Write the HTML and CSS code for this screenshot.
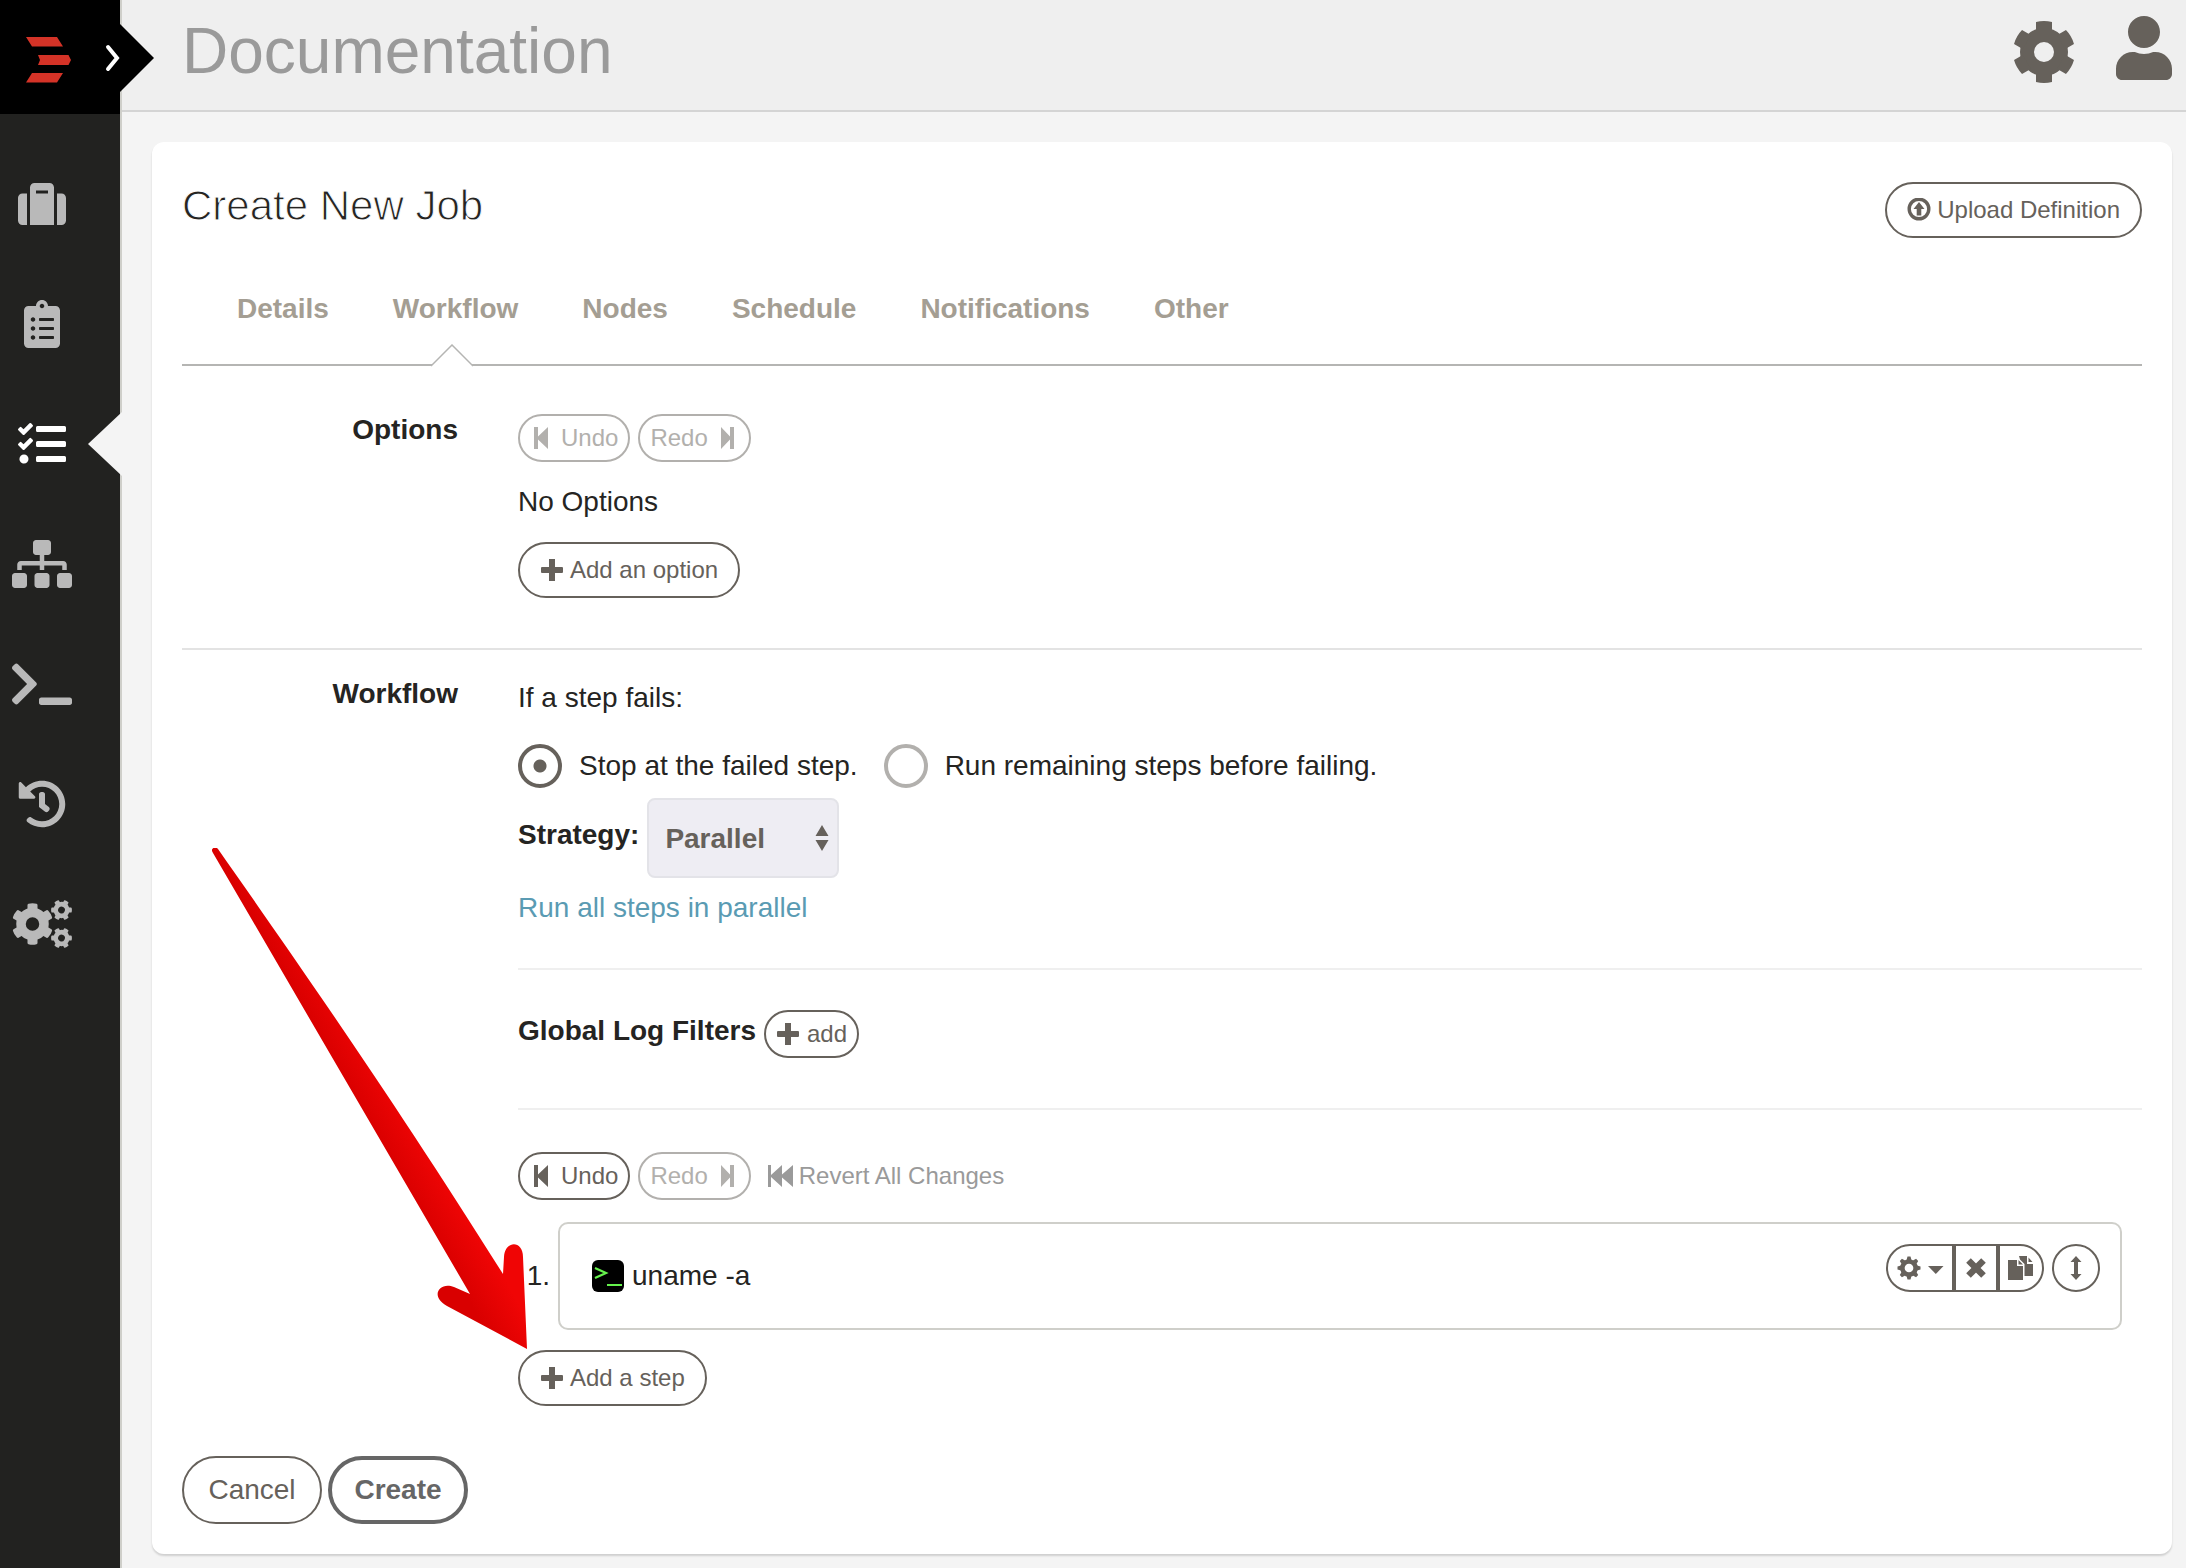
FILE: index.html
```html
<!DOCTYPE html>
<html lang="en">
<head>
<meta charset="utf-8">
<title>Create New Job</title>
<link rel="stylesheet" href="styles.css">
</head>
<body>
<svg class="defs" aria-hidden="true">
  <symbol id="plus" viewBox="0 0 24 24"><path d="M9 1h6v8h7q1 0 1 1v4q0 1-1 1h-7v8h-6v-8H2q-1 0-1-1v-4q0-1 1-1h7z"/></symbol>
  <symbol id="step-back" viewBox="0 0 24 24"><path d="M4 1h4v9.500L18 1v22L8 13.500V23H4z"/></symbol>
  <symbol id="step-forward" viewBox="0 0 24 24"><path d="M19 1h-4v9.500L6 1v22l9-9.500V23h4z"/></symbol>
  <symbol id="fast-back" viewBox="0 0 26 24"><path d="M0 1h3v10L14 1v9.500L25 1v22l-11-9.500V23L3 13v10H0z"/></symbol>
</svg>
<div class="app">
  <aside class="sidebar">
    <a class="brand" href="#home" aria-label="Home">
      <svg class="logo" viewBox="0 0 45 46"><path d="M0 0h31l6 9.500H6zM12 18h30.500l2.500 5-2.500 5H12l2-5zM6 36h31l-6 9.500H0z"/></svg>
      <svg class="brand-tip" viewBox="0 0 50 68"><path fill="#000" d="M16 0l34 34-34 34z"/><path d="M4 23l9 11-9 11" fill="none" stroke="#fff" stroke-width="4" stroke-linecap="round"/></svg>
    </a>
    <nav class="nav">
      <a class="nav-item" href="#projects" aria-label="Projects"><svg viewBox="-64 0 640 512"><path d="M128 480h256V80c0-26.500-21.500-48-48-48H176c-26.500 0-48 21.500-48 48v400zm64-368h128v32H192zm320 64v256c0 26.500-21.500 48-48 48h-48V144h48c26.500 0 48 21.500 48 48zM96 480H48c-26.500 0-48-21.500-48-48V192c0-26.500 21.500-48 48-48h48z"/></svg></a>
      <a class="nav-item" href="#dashboard" aria-label="Dashboard"><svg viewBox="-128 0 640 512"><path d="M336 64h-80c0-35.300-28.700-64-64-64s-64 28.700-64 64H48C21.500 64 0 85.500 0 112v352c0 26.500 21.500 48 48 48h288c26.500 0 48-21.500 48-48V112c0-26.500-21.500-48-48-48zM96 424c-13.300 0-24-10.700-24-24s10.700-24 24-24 24 10.700 24 24-10.700 24-24 24zm0-96c-13.300 0-24-10.700-24-24s10.700-24 24-24 24 10.700 24 24-10.700 24-24 24zm0-96c-13.300 0-24-10.700-24-24s10.700-24 24-24 24 10.700 24 24-10.700 24-24 24zm96-192c13.300 0 24 10.700 24 24s-10.700 24-24 24-24-10.700-24-24 10.700-24 24-24zm128 368c0 4.400-3.600 8-8 8H168c-4.400 0-8-3.600-8-8v-16c0-4.400 3.600-8 8-8h144c4.400 0 8 3.600 8 8v16zm0-96c0 4.400-3.600 8-8 8H168c-4.400 0-8-3.600-8-8v-16c0-4.400 3.600-8 8-8h144c4.400 0 8 3.600 8 8v16zm0-96c0 4.400-3.600 8-8 8H168c-4.400 0-8-3.600-8-8v-16c0-4.400 3.600-8 8-8h144c4.400 0 8 3.600 8 8v16z"/></svg></a>
      <a class="nav-item active" href="#jobs" aria-label="Jobs" aria-current="page"><svg viewBox="-64 0 640 512"><path d="M139.610 35.500a12 12 0 0 0-17 0L58.930 98.810l-22.700-22.120a12 12 0 0 0-17 0L3.530 92.410a12 12 0 0 0 0 17l47.590 47.400a12.780 12.780 0 0 0 17.610 0l15.590-15.620L156.520 69a12.090 12.090 0 0 0 .09-17zm0 159.190a12 12 0 0 0-17 0l-63.680 63.720-22.700-22.100a12 12 0 0 0-17 0L3.530 252a12 12 0 0 0 0 17L51 316.500a12.770 12.770 0 0 0 17.600 0l15.700-15.690 72.200-72.220a12 12 0 0 0 .09-16.900zM64 368c-26.490 0-48.590 21.500-48.590 48S37.530 464 64 464a48 48 0 0 0 0-96zm432 16H208a16 16 0 0 0-16 16v32a16 16 0 0 0 16 16h288a16 16 0 0 0 16-16v-32a16 16 0 0 0-16-16zm0-320H208a16 16 0 0 0-16 16v32a16 16 0 0 0 16 16h288a16 16 0 0 0 16-16V80a16 16 0 0 0-16-16zm0 160H208a16 16 0 0 0-16 16v32a16 16 0 0 0 16 16h288a16 16 0 0 0 16-16v-32a16 16 0 0 0-16-16z"/></svg></a>
      <a class="nav-item" href="#nodes" aria-label="Nodes"><svg viewBox="0 0 640 512"><path d="M128 352H32c-17.670 0-32 14.330-32 32v96c0 17.670 14.330 32 32 32h96c17.670 0 32-14.330 32-32v-96c0-17.670-14.330-32-32-32zm-24-80h192v48h48v-48h192v48h48v-57.590c0-21.170-17.230-38.410-38.410-38.410H344v-64h40c17.670 0 32-14.330 32-32V32c0-17.670-14.330-32-32-32H256c-17.670 0-32 14.330-32 32v96c0 17.670 14.330 32 32 32h40v64H94.410C73.230 224 56 241.230 56 262.410V320h48v-48zm264 80h-96c-17.670 0-32 14.330-32 32v96c0 17.670 14.330 32 32 32h96c17.670 0 32-14.330 32-32v-96c0-17.670-14.330-32-32-32zm240 0h-96c-17.670 0-32 14.330-32 32v96c0 17.670 14.330 32 32 32h96c17.670 0 32-14.330 32-32v-96c0-17.670-14.330-32-32-32z"/></svg></a>
      <a class="nav-item" href="#commands" aria-label="Commands"><svg viewBox="0 0 640 512"><path d="M257.981 272.971L63.638 467.314c-9.373 9.373-24.569 9.373-33.941 0L7.029 444.647c-9.357-9.357-9.375-24.522-.04-33.901L161.011 256 6.990 101.255c-9.335-9.379-9.317-24.544.04-33.901l22.667-22.667c9.373-9.373 24.569-9.373 33.941 0L257.981 239.030c9.373 9.372 9.373 24.568 0 33.941zM640 456v-32c0-13.255-10.745-24-24-24H312c-13.255 0-24 10.745-24 24v32c0 13.255 10.745 24 24 24h304c13.255 0 24-10.745 24-24z"/></svg></a>
      <a class="nav-item" href="#activity" aria-label="Activity"><svg viewBox="-64 0 640 512"><path d="M504 255.531c.253 136.640-111.180 248.372-247.820 248.468-59.015.042-113.223-20.530-155.822-54.911-11.077-8.940-11.905-25.541-1.839-35.607l11.267-11.267c8.609-8.609 22.353-9.551 31.891-1.984C173.062 425.135 212.781 440 256 440c101.705 0 184-82.311 184-184 0-101.705-82.311-184-184-184-48.814 0-93.149 18.969-126.068 49.932l50.754 50.754c10.080 10.080 2.941 27.314-11.313 27.314H24c-8.837 0-16-7.163-16-16V38.627c0-14.254 17.234-21.393 27.314-11.314l49.372 49.372C129.209 34.136 189.552 8 256 8c136.810 0 247.747 110.780 248 247.531zm-180.912 78.784l9.823-12.630c8.138-10.463 6.253-25.542-4.210-33.679L288 256.349V152c0-13.255-10.745-24-24-24h-16c-13.255 0-24 10.745-24 24v135.651l65.409 50.874c10.463 8.137 25.541 6.253 33.679-4.210z"/></svg></a>
      <a class="nav-item" href="#settings" aria-label="Project settings"><svg viewBox="0 0 60 48">
        <g id="gear6"><circle cx="20.500" cy="24" r="11.500" fill="none" stroke="currentColor" stroke-width="9.500"/><g id="tooth-pair"><path d="M15.500 10V5q0-1 1-1.300 4-1 8 0 1 .3 1 1.300v5zM15.500 38v5q0 1 1 1.300 4 1 8 0 1-.3 1-1.300v-5z"/></g><use href="#tooth-pair" transform="rotate(60 20.500 24)"/><use href="#tooth-pair" transform="rotate(120 20.500 24)"/></g>
        <use href="#gear6" transform="translate(49.500 10) rotate(30) scale(.5) translate(-20.500 -24)"/>
        <use href="#gear6" transform="translate(49.500 38) rotate(30) scale(.5) translate(-20.500 -24)"/>
      </svg></a>
    </nav>
  </aside>
  <div class="page">
    <header class="topbar">
      <h1 class="project">Documentation</h1>
      <div class="topbar-actions">
        <a href="#system" aria-label="System settings"><svg width="62" height="64" viewBox="0 0 62 64"><circle cx="31" cy="32" r="17" fill="none" stroke="currentColor" stroke-width="14"/><g id="cog-teeth"><path d="M23 12V2q8-2 16 0v10zM23 52v10q8 2 16 0V52z"/></g><use href="#cog-teeth" transform="rotate(60 31 32)"/><use href="#cog-teeth" transform="rotate(120 31 32)"/></svg></a>
        <a class="user" href="#user" aria-label="User"><svg width="56" height="64" viewBox="0 0 448 512"><path d="M224 256c70.700 0 128-57.300 128-128S294.700 0 224 0 96 57.300 96 128s57.300 128 128 128zm89.600 32h-16.700c-22.200 10.200-46.900 16-72.900 16s-50.600-5.800-72.900-16h-16.700C60.200 288 0 348.200 0 422.400V464c0 26.500 21.500 48 48 48h352c26.500 0 48-21.500 48-48v-41.600c0-74.200-60.200-134.400-134.400-134.400z"/></svg></a>
      </div>
    </header>
    <main class="main">
      <form class="card">
        <div class="card-head">
          <h2 class="title">Create New Job</h2>
          <button class="btn" type="button"><svg class="icon" viewBox="0 0 24 24"><circle cx="12" cy="11" r="9.800" fill="none" stroke="currentColor" stroke-width="3.400"/><path d="M12 4l5.500 7h-3.200v6.500H9.700V11H6.500z"/></svg>Upload Definition</button>
        </div>
        <nav class="tabs">
          <a class="tab" href="#details">Details</a>
          <a class="tab selected" href="#workflow">Workflow<svg class="notch" width="42" height="23" viewBox="0 0 42 23"><path fill="#fff" d="M1 21L21 1l20 20v2H1z"/><path fill="none" stroke="#b5b5b3" stroke-width="1.500" d="M0 22L21 1l21 21"/></svg></a>
          <a class="tab" href="#job-nodes">Nodes</a>
          <a class="tab" href="#schedule">Schedule</a>
          <a class="tab" href="#notifications">Notifications</a>
          <a class="tab" href="#other">Other</a>
        </nav>
        <section class="section options">
          <h3 class="section-label">Options</h3>
          <div class="section-body">
            <div class="row">
              <button class="btn small" type="button" disabled><svg class="icon"><use href="#step-back"/></svg>Undo</button>
              <button class="btn small" type="button" disabled>Redo<svg class="icon"><use href="#step-forward"/></svg></button>
            </div>
            <p class="text empty">No Options</p>
            <button class="btn" type="button"><svg class="icon"><use href="#plus"/></svg>Add an option</button>
          </div>
        </section>
        <section class="section workflow">
          <h3 class="section-label">Workflow</h3>
          <div class="section-body">
            <p class="text">If a step fails:</p>
            <div class="radios">
              <label class="radio"><input type="radio" name="keepgoing" checked>Stop at the failed step.</label>
              <label class="radio"><input type="radio" name="keepgoing">Run remaining steps before failing.</label>
            </div>
            <div class="row strategy">
              <label class="strategy-label" for="strategy">Strategy:</label>
              <span class="select">
                <select id="strategy"><option>Parallel</option></select>
                <svg class="select-arrows" width="14" height="26" viewBox="0 0 14 26"><path d="M7 0l6.500 11H.5zM7 26l6.500-11H.5z"/></svg>
              </span>
            </div>
            <a class="text help" href="#strategy-help">Run all steps in parallel</a>
            <div class="filters">
              <strong class="filters-label">Global Log Filters</strong>
              <button class="btn small" type="button"><svg class="icon"><use href="#plus"/></svg>add</button>
            </div>
            <div class="row">
              <button class="btn small" type="button"><svg class="icon"><use href="#step-back"/></svg>Undo</button>
              <button class="btn small" type="button" disabled>Redo<svg class="icon"><use href="#step-forward"/></svg></button>
              <button class="btn-link" type="button"><svg class="icon wide"><use href="#fast-back"/></svg>Revert All Changes</button>
            </div>
            <ol class="steps">
              <li class="step">
                <span class="step-number">1.</span>
                <div class="step-box">
                  <span class="command"><svg width="32" height="32" viewBox="0 0 32 32"><rect width="32" height="32" rx="6" fill="#000"/><path d="M3 8l11 5-11 5M15 25h15" fill="none" stroke="#66f24d" stroke-width="2.200"/></svg>uname -a</span>
                  <span class="step-actions">
                    <span class="group">
                      <button class="btn small part-menu" type="button" aria-label="Step menu"><svg width="48" height="24" viewBox="0 0 48 24"><circle cx="13" cy="12" r="6.600" fill="none" stroke="currentColor" stroke-width="4.500"/><g id="fine-teeth"><path d="M10.500 4l1-3.500h3l1 3.500zM10.500 20l1 3.500h3l1-3.500z"/></g><use href="#fine-teeth" transform="rotate(45 13 12)"/><use href="#fine-teeth" transform="rotate(90 13 12)"/><use href="#fine-teeth" transform="rotate(135 13 12)"/><path d="M32 10h15.500L39.800 18z"/></svg></button><button class="btn small part-remove" type="button" aria-label="Delete step"><svg width="24" height="24" viewBox="0 0 24 24"><path d="M4.500 4.500l15 15M19.500 4.500l-15 15" stroke="currentColor" stroke-width="6.500"/></svg></button><button class="btn small part-copy" type="button" aria-label="Duplicate step"><svg width="26" height="24" viewBox="0 0 26 24"><path d="M0 4h9v6h6v14H0zM10.500 4L15 8.500h-4.500zM11 0h8v8h6v12h-8.500V8L12 3.500zM20.500 1.500l4 4.500h-4z"/></svg></button>
                    </span>
                    <button class="btn small round" type="button" aria-label="Move step"><svg width="12" height="24" viewBox="0 0 12 24"><path d="M6 0l5.500 6H8v12h3.500L6 24 .5 18H4V6H.5z"/></svg></button>
                  </span>
                </div>
              </li>
            </ol>
            <button class="btn" type="button"><svg class="icon"><use href="#plus"/></svg>Add a step</button>
          </div>
        </section>
        <div class="row form-actions">
          <button class="btn large" type="button">Cancel</button>
          <button class="btn large primary" type="submit">Create</button>
        </div>
      </form>
    </main>
  </div>
</div>
<svg class="annotation" width="316" height="502" viewBox="0 0 316 502" aria-hidden="true">
  <defs><linearGradient id="red" gradientUnits="userSpaceOnUse" x1="205" y1="362" x2="242" y2="341"><stop offset="0" stop-color="#d90000"/><stop offset="1" stop-color="#f00505"/></linearGradient></defs>
  <path fill="url(#red)" d="M0 3C-1 0 4-2 6 1C76 101 176 243 291 426L292 409C293 392 311 392 311 409L315 501L235 458C217 448 228 433 242 439L258 446L1 5Z"/>
</svg>
</body>
</html>
```
FILE: styles.css
```css
* { box-sizing: border-box; }

body {
  margin: 0;
  position: relative;
  background: #f4f4f4;
  color: #252422;
  font-family: "Liberation Sans", Arial, sans-serif;
  font-size: 28px;
  line-height: 40px;
}

h1, h2, h3, p, ol { margin: 0; padding: 0; font-weight: normal; }
a { color: inherit; text-decoration: none; }
svg { display: block; fill: currentColor; flex: none; }
.defs { position: absolute; width: 0; height: 0; }

.app {
  display: grid;
  grid-template-columns: 122px 1fr;
  min-height: 100vh;
}

/* Sidebar */
.sidebar {
  background: #222220;
  border-right: 2px solid #cfcfca;
}
.brand {
  position: relative;
  display: block;
  height: 114px;
  padding: 37px 26px;
  background: #000;
}
.logo { width: 45px; height: 46px; color: #d43327; }
.brand-tip {
  position: absolute;
  left: 104px;
  top: 24px;
  width: 50px;
  height: 68px;
}
.nav { padding-top: 30px; color: #b9b9b9; }
.nav-item {
  position: relative;
  display: flex;
  align-items: center;
  height: 120px;
  padding-left: 12px;
}
.nav-item svg { width: 60px; height: 48px; }
.nav-item.active { color: #fff; }
.nav-item.active::after {
  content: "";
  position: absolute;
  right: -2px;
  top: 28px;
  width: 34px;
  height: 64px;
  background: #f4f4f4;
  clip-path: polygon(100% 0, 100% 100%, 0 50%);
}

/* Top bar */
.topbar {
  display: flex;
  justify-content: space-between;
  height: 112px;
  padding: 15px 14px 0 60px;
  background: #efefef;
  border-bottom: 2px solid #d4d4d4;
  color: #66615b;
}
.project { font-size: 64px; line-height: 72px; color: #9a9a9a; }
.topbar-actions { display: flex; gap: 41px; padding-top: 5px; }
.user { margin-top: -4px; }

/* Card */
.main { padding: 30px 14px 14px 30px; }
.card {
  padding: 40px 30px 30px;
  background: #fff;
  border-radius: 12px;
  box-shadow: 0 2px 2px rgba(0, 0, 0, .15);
}
.card-head { display: flex; justify-content: space-between; align-items: flex-start; }
.title { font-size: 42px; line-height: 48px; -webkit-text-stroke: 1px #fff; }

.tabs {
  display: flex;
  gap: 64px;
  margin-top: 51px;
  padding: 0 55px 35px;
  border-bottom: 2px solid #b5b5b3;
  color: #a49e93;
  font-weight: bold;
}
.tab { position: relative; }
.notch { position: absolute; left: 38px; top: 55px; }

.section {
  display: grid;
  grid-template-columns: 276px 1fr;
  gap: 60px;
}
.section.options { padding: 44px 0 50px; border-bottom: 2px solid #e3e3e3; }
.section.workflow { padding: 24px 0 50px; }
.section-label { text-align: right; font-size: 28px; font-weight: bold; }
.section-body { padding-top: 4px; }
.row { display: flex; gap: 8px; }
.form-actions { gap: 6px; }
.empty { margin: 20px 0; }

/* Buttons */
.btn, .btn-link {
  display: inline-flex;
  align-items: center;
  justify-content: center;
  gap: 6px;
  height: 56px;
  padding: 0 20px;
  border: 2px solid #66615b;
  border-radius: 34px;
  background: transparent;
  color: #66615b;
  font-family: inherit;
  font-size: 24px;
  vertical-align: top;
  white-space: nowrap;
}
.btn:disabled { border-color: #b2b0ad; color: #b2b0ad; }
.btn.small { height: 48px; padding: 0 10px; gap: 7px; }
.btn.large { height: 68px; min-width: 140px; font-size: 28px; }
.btn.primary { border: 4px solid #666; color: #666; font-weight: bold; }
.btn-link { height: 48px; padding: 0 9px; gap: 5px; border: 0; color: #9a9a9a; }
.icon { width: 24px; height: 24px; }
.icon.wide { width: 26px; }

/* Workflow controls */
.radios { display: flex; gap: 26px; margin-top: 26px; }
.radio { display: flex; align-items: center; gap: 17px; line-height: 44px; }
.radio input {
  appearance: none;
  width: 44px;
  height: 44px;
  margin: 0;
  border: 4px solid #b2b0ad;
  border-radius: 50%;
}
.radio input:checked {
  border-color: #66615b;
  background: radial-gradient(circle, #66615b 6px, transparent 7px);
}
.strategy { align-items: center; margin: 10px 0; }
.strategy-label { padding-bottom: 6px; font-weight: bold; }
.select { position: relative; }
.select select {
  appearance: none;
  display: block;
  width: 192px;
  height: 80px;
  padding: 0 16px;
  border: 2px solid #e3e3e8;
  border-radius: 8px;
  background: #eeedf3;
  color: #66615b;
  font: bold 28px "Liberation Sans", Arial, sans-serif;
}
.select-arrows { position: absolute; right: 10px; top: 27px; color: #66615b; pointer-events: none; }
.help { display: block; color: #5a9bb3; }
.filters {
  display: flex;
  align-items: flex-start;
  gap: 8px;
  margin: 40px 0 42px;
  padding: 40px 0 50px;
  border-top: 2px solid #efefef;
  border-bottom: 2px solid #efefef;
}
.filters-label { line-height: 42px; }

/* Steps */
.steps { list-style: none; margin: 22px 20px 20px 0; }
.step { display: grid; grid-template-columns: 40px 1fr; align-items: center; }
.step-number { padding-right: 8px; text-align: right; }
.step-box {
  display: flex;
  justify-content: space-between;
  align-items: center;
  height: 108px;
  padding: 20px 20px 20px 32px;
  border: 2px solid #cfcfca;
  border-radius: 10px;
}
.command { display: flex; align-items: center; gap: 8px; }
.step-actions { display: flex; gap: 8px; align-self: flex-start; }
.group { display: flex; }
.group .btn { padding: 0; }
.group .part-menu { width: 68px; border-radius: 24px 0 0 24px; }
.group .part-remove { width: 44px; border-radius: 0; }
.group .part-copy { width: 46px; border-radius: 0 24px 24px 0; }
.btn.round { width: 48px; padding: 0; }

/* Callout drawn over the form */
.annotation { position: absolute; left: 212px; top: 848px; pointer-events: none; }
```
